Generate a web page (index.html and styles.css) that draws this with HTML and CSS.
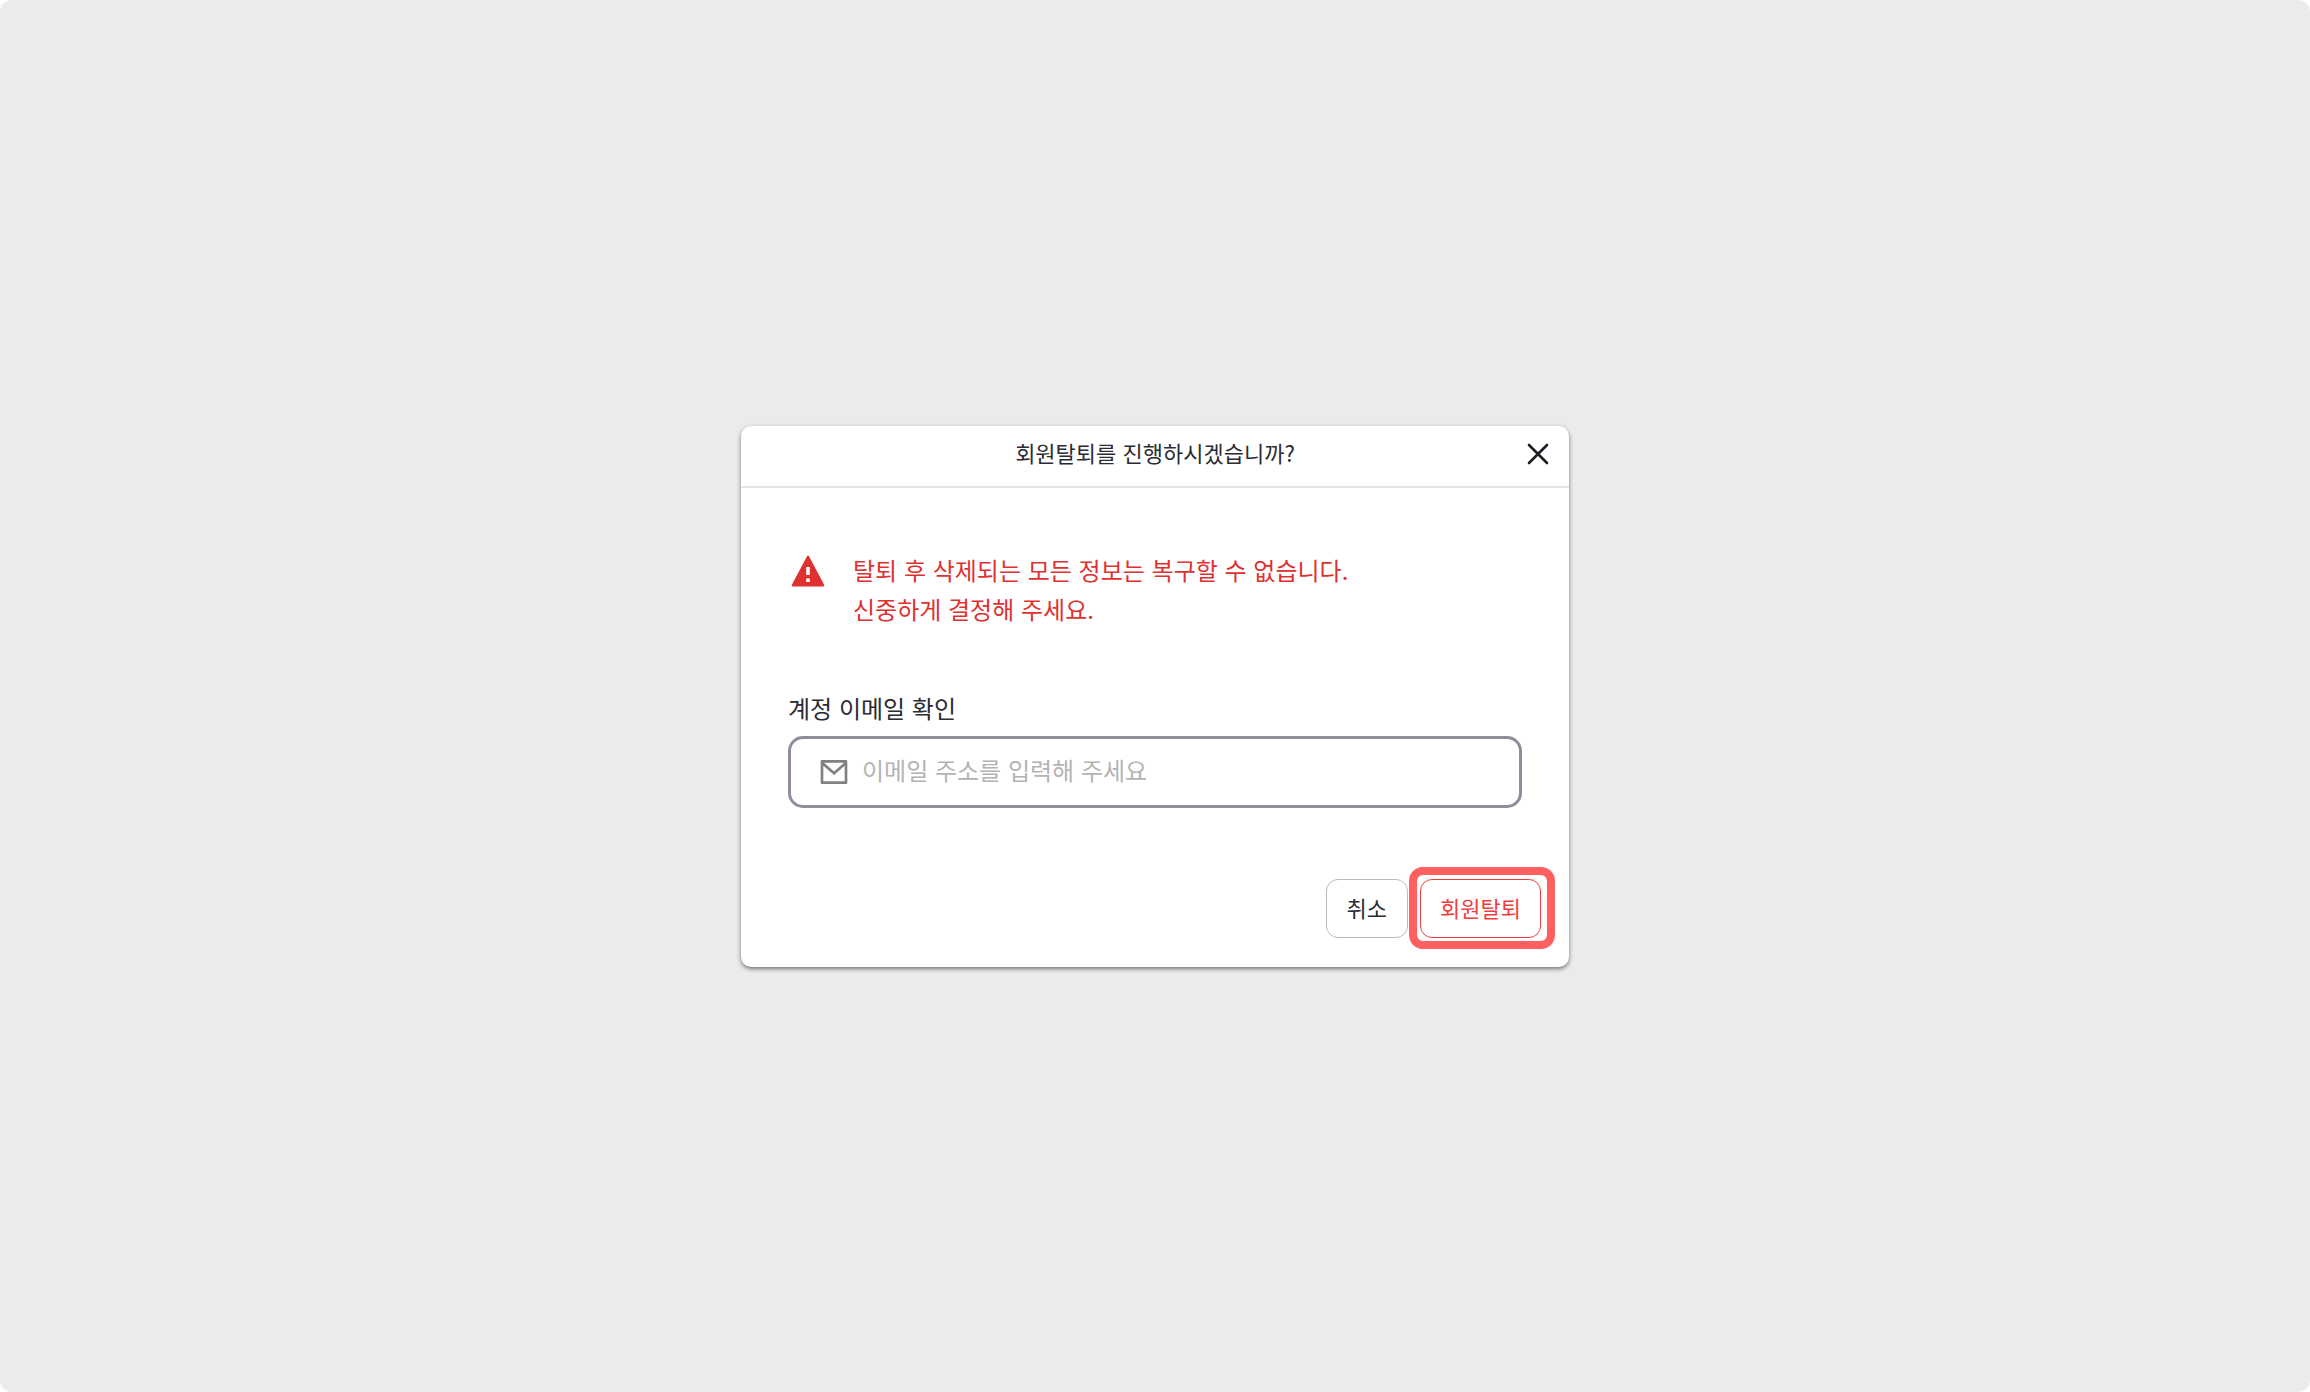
FILE: index.html
```
<!DOCTYPE html>
<html lang="ko">

<head>
    <meta charset="UTF-8">
    <meta name="viewport" content="width=device-width, initial-scale=1.0">
    <title>회원탈퇴</title>
    <link rel="stylesheet" href="styles.css">
</head>

<body>
    <main class="page">
        <form class="modal" role="dialog" aria-labelledby="modal-title">
            <header class="modal-header">
                <h1 class="modal-title" id="modal-title">회원탈퇴를 진행하시겠습니까?</h1>
                <button class="btn-close" type="button" aria-label="닫기">
                    <svg width="24" height="24" viewBox="0 0 24 24" fill="none" stroke="currentColor" stroke-width="2.600" stroke-linecap="round">
                        <path d="M3 3L21 21M21 3L3 21" />
                    </svg>
                </button>
            </header>
            <div class="modal-body">
                <div class="warning">
                    <svg class="warning-icon" width="36" height="36" viewBox="0 0 36 36">
                        <path fill="currentColor" d="M18 1.500c.5 0 .8.2 1 .7L34 30.500c.6 1 .2 2-1 2H3c-1.200 0-1.600-1-1-2L17 2.200c.2-.5.500-.7 1-.7z" />
                        <path fill="#fff" d="M16.200 13h3.600v8h-3.600zM16.200 24.500h3.600V28h-3.600z" />
                    </svg>
                    <p class="warning-text">탈퇴 후 삭제되는 모든 정보는 복구할 수 없습니다.<br>신중하게 결정해 주세요.</p>
                </div>
                <label class="label" for="email">계정 이메일 확인</label>
                <div class="input-box">
                    <svg class="mail-icon" width="32" height="32" viewBox="0 0 24 24">
                        <path fill="currentColor" d="M3 3h18a1 1 0 0 1 1 1v16a1 1 0 0 1-1 1H3a1 1 0 0 1-1-1V4a1 1 0 0 1 1-1zm17 4.240l-7.930 7.100L4 7.220V19h16V7.240zM4.510 5l7.550 6.660L19.500 5H4.510z" />
                    </svg>
                    <input class="input" id="email" type="email" placeholder="이메일 주소를 입력해 주세요">
                </div>
            </div>
            <footer class="modal-footer">
                <button class="btn" type="button">취소</button>
                <button class="btn btn-danger" type="submit">회원탈퇴</button>
            </footer>
        </form>
    </main>
</body>

</html>
```

FILE: styles.css
```
* {
    box-sizing: border-box;
}

body {
    margin: 0;
    background: #ffffff;
    color: #2b2b33;
    font-family: "Noto Sans CJK KR", sans-serif;
}

.page {
    display: flex;
    align-items: center;
    justify-content: center;
    min-height: 100vh;
    border-radius: 12px;
    background: #ebebeb;
}

.modal {
    width: 100%;
    max-width: 828px;
    border-radius: 10px;
    background: #ffffff;
    box-shadow: 0 2px 4px rgba(0, 0, 0, .5);
}

.modal-header {
    display: grid;
    grid-template-columns: 40px 1fr 40px;
    align-items: start;
    padding: 8px 11px 12px;
    border-bottom: 2px solid #e4e4eb;
}

.modal-title {
    grid-column: 2;
    margin: 0;
    font-size: 22px;
    font-weight: 400;
    line-height: 36px;
    text-align: center;
}

.btn-close {
    display: flex;
    align-items: center;
    justify-content: center;
    width: 40px;
    height: 40px;
    padding: 0;
    border: 0;
    background: none;
    color: #1b1b23;
    cursor: pointer;
}

.modal-body {
    padding: 62px 47px 71px;
}

.warning {
    display: flex;
    gap: 27px;
    margin-bottom: 60px;
    padding-left: 2px;
    color: #e03131;
}

.warning-icon {
    flex: none;
    margin-top: 4px;
}

.warning-text {
    margin: 0;
    font-size: 24px;
    line-height: 39px;
}

.label {
    display: block;
    margin-bottom: 9px;
    font-size: 24px;
    line-height: 39px;
}

.input-box {
    display: flex;
    align-items: center;
    gap: 12px;
    height: 72px;
    padding: 0 27px;
    border: 3px solid #8f8d9b;
    border-radius: 15px;
}

.mail-icon {
    flex: none;
    color: #808080;
}

.input {
    flex: 1;
    min-width: 0;
    padding: 0 0 4px;
    border: 0;
    outline: 0;
    background: none;
    color: inherit;
    font-family: inherit;
    font-size: 24px;
    line-height: 39px;
}

.input::placeholder {
    color: #b3b3b3;
}

.modal-footer {
    display: flex;
    justify-content: flex-end;
    gap: 12px;
    padding: 0 28px 29px;
}

.btn {
    position: relative;
    height: 59px;
    padding: 0 20px 2px;
    border: 1px solid #bbbbbb;
    border-radius: 12px;
    background: #ffffff;
    color: #2b2b33;
    font-family: inherit;
    font-size: 22px;
    cursor: pointer;
}

.btn-danger {
    padding: 0 19px 2px;
    border-color: #f03e3e;
    color: #f03e3e;
}

/* highlight ring */
.btn-danger::after {
    content: "";
    position: absolute;
    inset: -13px -15px -12px -12px;
    border: 8px solid #ff5f5f;
    border-radius: 14px;
    pointer-events: none;
}
```
